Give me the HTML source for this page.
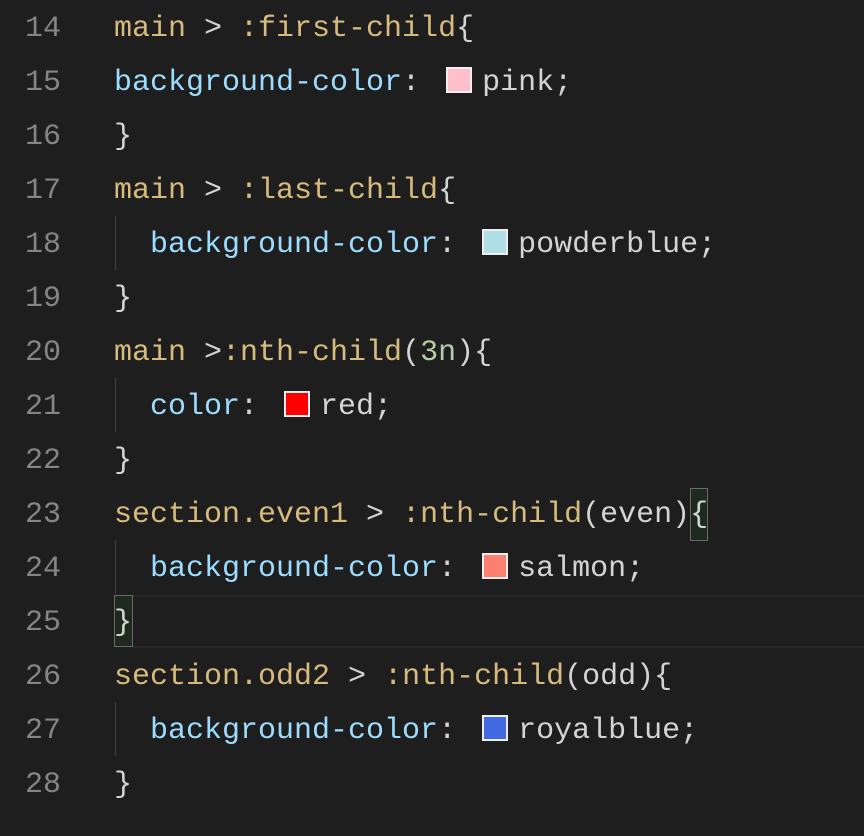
<!DOCTYPE html>
<html><head><style>
html,body{margin:0;padding:0;background:#1e1e1e;width:864px;height:836px;overflow:hidden}
.l{position:absolute;left:0;height:54px;width:864px;font-family:"Liberation Mono",monospace;font-size:30px;line-height:54px;color:#d4d4d4;white-space:pre;margin-top:2px}
.n{position:absolute;left:0;width:61px;text-align:right;color:#858585}
.c{position:absolute;left:114px}
.s{color:#d7ba7d}.p{color:#9cdcfe}.num{color:#b5cea8}
.sw{display:inline-block;width:22px;height:22px;border:2px solid #eee;margin:0 10px 0 8px;vertical-align:-3px}
.g{position:absolute;left:115px;width:1px;height:54px;background:#404040}
.box{position:absolute;border:1px solid #6a6a6a;background:#1d2a1d}
</style></head><body>
<div style="position:absolute;left:132px;top:595px;width:732px;height:49px;border-top:2px solid #282828;border-bottom:2px solid #282828"></div>
<div class="box" style="left:690px;top:488px;width:16px;height:51px"></div>
<div class="box" style="left:114px;top:595px;width:17px;height:50px"></div>
<div class="g" style="top:216px"></div>
<div class="g" style="top:378px"></div>
<div class="g" style="top:540px"></div>
<div class="g" style="top:702px"></div>

<div class="l" style="top:0"><span class="n">14</span><span class="c"><span class="s">main</span> &gt; <span class="s">:first-child</span>{</span></div>
<div class="l" style="top:54px"><span class="n">15</span><span class="c"><span class="p">background-color</span>: <span class="sw" style="background:pink"></span>pink;</span></div>
<div class="l" style="top:108px"><span class="n">16</span><span class="c">}</span></div>
<div class="l" style="top:162px"><span class="n">17</span><span class="c"><span class="s">main</span> &gt; <span class="s">:last-child</span>{</span></div>
<div class="l" style="top:216px"><span class="n">18</span><span class="c">  <span class="p">background-color</span>: <span class="sw" style="background:powderblue"></span>powderblue;</span></div>
<div class="l" style="top:270px"><span class="n">19</span><span class="c">}</span></div>
<div class="l" style="top:324px"><span class="n">20</span><span class="c"><span class="s">main</span> &gt;<span class="s">:nth-child</span>(<span class="num">3n</span>){</span></div>
<div class="l" style="top:378px"><span class="n">21</span><span class="c">  <span class="p">color</span>: <span class="sw" style="background:red"></span>red;</span></div>
<div class="l" style="top:432px"><span class="n">22</span><span class="c">}</span></div>
<div class="l" style="top:486px"><span class="n">23</span><span class="c"><span class="s">section.even1</span> &gt; <span class="s">:nth-child</span>(even){</span></div>
<div class="l" style="top:540px"><span class="n">24</span><span class="c">  <span class="p">background-color</span>: <span class="sw" style="background:salmon"></span>salmon;</span></div>
<div class="l" style="top:594px"><span class="n">25</span><span class="c">}</span></div>
<div class="l" style="top:648px"><span class="n">26</span><span class="c"><span class="s">section.odd2</span> &gt; <span class="s">:nth-child</span>(odd){</span></div>
<div class="l" style="top:702px"><span class="n">27</span><span class="c">  <span class="p">background-color</span>: <span class="sw" style="background:royalblue"></span>royalblue;</span></div>
<div class="l" style="top:756px"><span class="n">28</span><span class="c">}</span></div>
</body></html>
